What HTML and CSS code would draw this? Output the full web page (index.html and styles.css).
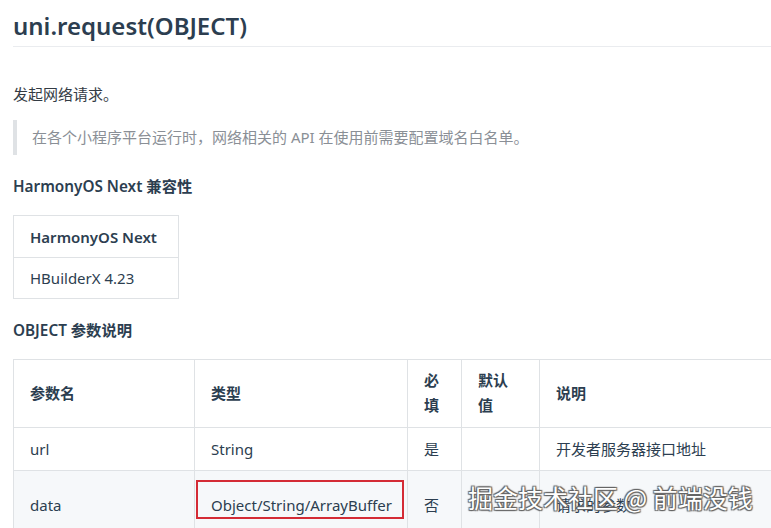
FILE: index.html
```html
<!DOCTYPE html>
<html lang="zh-CN">
<head>
<meta charset="utf-8">
<title>uni.request(OBJECT)</title>
<link rel="stylesheet" href="styles.css">
</head>
<body>
<main class="page">
  <h1 class="title">uni.request(OBJECT)</h1>
  <p class="lead">发起网络请求。</p>
  <blockquote class="note">在各个小程序平台运行时，网络相关的 API 在使用前需要配置域名白名单。</blockquote>
  <h4 class="sub">HarmonyOS Next 兼容性</h4>
  <table class="tbl compat">
    <thead><tr><th>HarmonyOS Next</th></tr></thead>
    <tbody><tr><td>HBuilderX 4.23</td></tr></tbody>
  </table>
  <h4 class="sub sub-obj">OBJECT 参数说明</h4>
  <table class="tbl params">
    <colgroup>
      <col class="c1"><col class="c2"><col class="c3"><col class="c4"><col class="c5">
    </colgroup>
    <thead>
      <tr><th>参数名</th><th>类型</th><th>必填</th><th class="narrow">默认值</th><th>说明</th></tr>
    </thead>
    <tbody>
      <tr><td>url</td><td>String</td><td>是</td><td></td><td>开发者服务器接口地址</td></tr>
      <tr class="alt tall"><td>data</td><td class="marked">Object/String/ArrayBuffer<span class="redbox"></span></td><td>否</td><td></td><td>请求的参数</td></tr>
    </tbody>
  </table>
  <div class="watermark">掘金技术社区 @ 前端没钱</div>
</main>
</body>
</html>
```

FILE: styles.css
```css
html, body {
  margin: 0;
  padding: 0;
  background: #ffffff;
  overflow: hidden;
}
body {
  width: 771px;
  height: 528px;
  font-family: "Noto Sans", "Noto Sans CJK SC", sans-serif;
  color: #2c3e50;
  font-size: 15px;
}
.page {
  position: relative;
  padding: 0 0 0 13px;
  width: 758px;
  height: 528px;
  overflow: hidden;
}
.title {
  margin: 0;
  padding-top: 10px;
  height: 36px;
  font-size: 24px;
  font-weight: 600;
  line-height: 32px;
  color: #2c3e50;
  border-bottom: 1px solid #eaecef;
}
.lead {
  margin: 34px 0 0;
  line-height: 26px;
  color: #333b44;
}
.note {
  margin: 13px 0 0;
  padding: 4px 0 5px 15px;
  border-left: 4px solid #dfe2e5;
  line-height: 26px;
  color: #8a8f96;
}
.sub {
  margin: 18px 0 0;
  font-size: 15.3px;
  font-weight: 600;
  line-height: 26px;
  color: #2c3e50;
}
.tbl {
  border-collapse: collapse;
  color: #2c3e50;
}
.tbl th, .tbl td {
  border: 1px solid #dfe2e5;
  padding: 9px 16px 8px;
  text-align: left;
  vertical-align: middle;
  line-height: 25px;
}
.tbl th {
  font-weight: 600;
}
.compat {
  margin-top: 16px;
  width: 166px;
}
.compat th, .compat td {
  padding: 7px 16px;
  line-height: 26px;
}
.compat th {
  padding-top: 8px;
}
.sub-obj {
  margin-top: 18px;
}
.params {
  margin-top: 16px;
  width: 900px;
  table-layout: fixed;
}
.params .c1 { width: 181px; }
.params .c2 { width: 213px; }
.params .c3 { width: 54px; }
.params .c4 { width: 78px; }
.params .c5 { width: 374px; }
.params thead th {
  padding-top: 8px;
  padding-bottom: 9px;
}
.params th.narrow {
  padding-right: 24px;
}
.alt td {
  background: #f6f8fa;
}
.tall td {
  padding-top: 22px;
  padding-bottom: 22px;
}
.marked {
  position: relative;
}
.redbox {
  position: absolute;
  left: 1px;
  top: 9px;
  width: 204px;
  height: 35px;
  border: 2px solid #d42b35;
}
.watermark {
  position: absolute;
  left: 468px;
  top: 479px;
  font-size: 25px;
  line-height: 36px;
  color: #ffffff;
  font-family: "Noto Sans CJK SC", sans-serif;
  text-shadow: 0 0 1px #555, 1px 1px 1px #666, -1px -1px 1px #666, 1px -1px 1px #666, -1px 1px 1px #666;
  white-space: nowrap;
}
```
